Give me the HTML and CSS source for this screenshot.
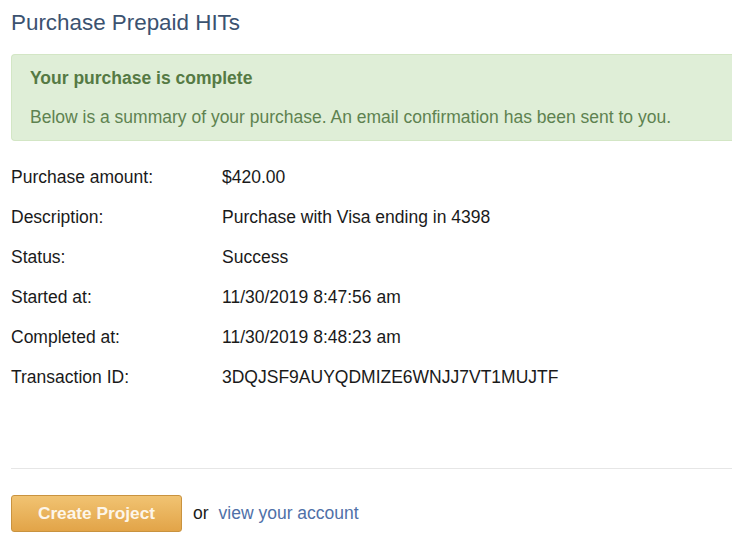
FILE: index.html
```html
<!DOCTYPE html>
<html lang="en">
<head>
<meta charset="utf-8">
<title>Purchase Prepaid HITs</title>
<link rel="stylesheet" href="styles.css">
</head>
<body>
<main class="page">
  <h1 class="page-title">Purchase Prepaid HITs</h1>
  <div class="alert">
    <h2 class="alert-title">Your purchase is complete</h2>
    <p class="alert-text">Below is a summary of your purchase. An email confirmation has been sent to you.</p>
  </div>
  <dl class="summary">
    <div class="row"><dt>Purchase amount:</dt><dd>$420.00</dd></div>
    <div class="row"><dt>Description:</dt><dd>Purchase with Visa ending in 4398</dd></div>
    <div class="row"><dt>Status:</dt><dd>Success</dd></div>
    <div class="row"><dt>Started at:</dt><dd>11/30/2019 8:47:56 am</dd></div>
    <div class="row"><dt>Completed at:</dt><dd>11/30/2019 8:48:23 am</dd></div>
    <div class="row"><dt>Transaction ID:</dt><dd>3DQJSF9AUYQDMIZE6WNJJ7VT1MUJTF</dd></div>
  </dl>
  <hr class="divider">
  <div class="actions">
    <button class="btn-primary" type="button">Create Project</button>
    <span class="or">or</span>
    <a class="link" href="#">view your account</a>
  </div>
</main>
</body>
</html>
```

FILE: styles.css
```css
html, body {
  margin: 0;
  padding: 0;
  background: #ffffff;
  overflow: hidden;
}
body {
  font-family: "Liberation Sans", Arial, sans-serif;
  color: #1a1a1a;
}
.page {
  padding: 9px 0 0 11px;
}
.page-title {
  margin: 0;
  font-size: 22.4px;
  font-weight: normal;
  line-height: 28px;
  color: #3b5270;
}
.alert {
  margin-top: 17px;
  background: #dfeed7;
  border: 1px solid #d3e6c5;
  border-right: none;
  border-radius: 4px 0 0 4px;
  padding: 13px 18px 13px 18px;
  color: #5e8250;
}
.alert-title {
  margin: 0;
  font-size: 17.5px;
  font-weight: bold;
  line-height: 20px;
  color: #557a44;
}
.alert-text {
  margin: 19px 0 0 0;
  font-size: 17.5px;
  line-height: 20px;
}
.summary {
  margin: 24px 0 0 0;
  padding: 0;
}
.row {
  display: grid;
  grid-template-columns: 211px 1fr;
  height: 40px;
  font-size: 17.5px;
  line-height: 24px;
}
.row dt, .row dd {
  margin: 0;
}
.divider {
  margin: 63px 0 0 0;
  border: none;
  border-top: 1px solid #e6e6e6;
}
.actions {
  display: flex;
  align-items: center;
  margin-top: 26px;
}
.btn-primary {
  width: 171px;
  height: 37px;
  font-family: "Liberation Sans", Arial, sans-serif;
  font-size: 17.3px;
  font-weight: bold;
  color: #fdf6ea;
  background: linear-gradient(#f1c372, #e2a448);
  border: 1px solid #c9933f;
  border-radius: 3px;
  padding: 0;
}
.or {
  margin-left: 11px;
  font-size: 17.5px;
}
.link {
  margin-left: 10px;
  font-size: 17.5px;
  color: #4f70a8;
  text-decoration: none;
}
```
